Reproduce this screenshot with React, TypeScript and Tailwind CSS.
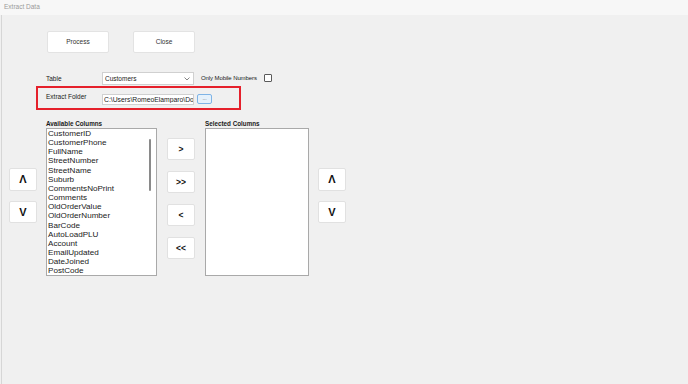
import React from 'react';

const available = [
  'CustomerID',
  'CustomerPhone',
  'FullName',
  'StreetNumber',
  'StreetName',
  'Suburb',
  'CommentsNoPrint',
  'Comments',
  'OldOrderValue',
  'OldOrderNumber',
  'BarCode',
  'AutoLoadPLU',
  'Account',
  'EmailUpdated',
  'DateJoined',
  'PostCode',
];

const ArrowButton: React.FC<{ label: string; className?: string }> = ({ label, className = '' }) => (
  <button
    className={`w-[28px] flex items-center justify-center bg-white border border-[#e1e1e1] rounded-[2px] text-[#111] font-bold leading-none ${className}`}
  >
    {label}
  </button>
);

const App: React.FC = () => {
  return (
    <div className="w-[688px] h-[384px] bg-[#f0f0f0] overflow-hidden font-['Liberation_Sans',Arial,sans-serif] text-[#1a1a1a]">
      {/* title bar */}
      <div className="h-[15px] bg-[#f7f7f7] pl-[4px] pt-[3px] text-[6.5px] leading-[8px] text-[#9a9a9a]">Extract Data</div>

      <div className="ml-[1px] h-[369px] border-l border-[#d6d6d6] flex flex-col">
        {/* action buttons */}
        <div className="mt-[16px] ml-[45px] flex gap-[24px]">
          <button className="w-[62px] h-[22px] bg-white border border-[#e3e3e3] rounded-[2px] text-[6.5px] text-[#333]">Process</button>
          <button className="w-[62px] h-[22px] bg-white border border-[#e3e3e3] rounded-[2px] text-[6.5px] text-[#333]">Close</button>
        </div>

        {/* table row */}
        <div className="mt-[19px] ml-[44px] flex items-center h-[13px]">
          <span className="w-[56px] text-[6.5px] mt-[1px]">Table</span>
          <div className="w-[92px] h-[13px] bg-white border border-[#d0d0d0] flex items-center justify-between pl-[2px] pr-[3px]">
            <span className="text-[6.5px]">Customers</span>
            <svg width="6" height="4" viewBox="0 0 6 4">
              <path d="M0.5 0.5 L3 3 L5.5 0.5" fill="none" stroke="#666" strokeWidth="0.8" />
            </svg>
          </div>
          <span className="ml-[7px] text-[6px] tracking-[-0.1px]">Only Mobile Numbers</span>
          <span className="ml-[7px] w-[8px] h-[8px] bg-white border border-[#5a5a5a] rounded-[1px] -mt-[1px]" />
        </div>

        {/* extract folder, highlighted */}
        <div className="mt-[1px] ml-[34px] w-[205px] h-[24px] border-2 border-[#e5202b] flex items-center pl-[8px]">
          <span className="w-[56px] text-[6.5px] -mt-[2px]">Extract Folder</span>
          <input
            readOnly
            value="C:\Users\RomeoElamparo\Downloads"
            className="w-[92px] h-[11px] bg-white border border-[#d0d0d0] pl-[1px] text-[6.8px] leading-none text-[#1a1a1a] mt-[2px] outline-none"
          />
          <button className="ml-[3px] w-[15px] h-[10px] bg-[#e5f1fb] border border-[#7fb4e6] rounded-[2px] text-[5px] leading-none text-[#555] mt-[1px]">...</button>
        </div>

        {/* columns area */}
        <div className="mt-[9px] ml-[7px] flex items-start">
          <div className="mt-[49px] flex flex-col gap-[10px]">
            <ArrowButton label="Λ" className="h-[23px] text-[11px]" />
            <ArrowButton label="V" className="h-[22px] text-[11px]" />
          </div>

          <div className="ml-[9px] flex flex-col">
            <span className="h-[9px] text-[6.3px] font-bold leading-[9px]">Available Columns</span>
            <div className="relative w-[111px] h-[148px] bg-white border border-[#a9a9a9] pl-[1px] overflow-hidden">
              {available.map((c) => (
                <div key={c} className="text-[8.1px] leading-[9.15px] whitespace-nowrap">
                  {c}
                </div>
              ))}
              <div className="absolute right-[5px] top-[10px] w-[2px] h-[52px] bg-[#8a8a8a] rounded-full" />
            </div>
          </div>

          <div className="ml-[10px] mt-[19px] flex flex-col gap-[11px]">
            <ArrowButton label=">" className="h-[22px] text-[8.5px]" />
            <ArrowButton label=">>" className="h-[22px] text-[8.5px]" />
            <ArrowButton label="<" className="h-[22px] text-[8.5px]" />
            <ArrowButton label="<<" className="h-[22px] text-[8.5px]" />
          </div>

          <div className="ml-[10px] flex flex-col">
            <span className="h-[9px] text-[6.3px] font-bold leading-[9px]">Selected Columns</span>
            <div className="w-[104px] h-[148px] bg-white border border-[#a9a9a9]" />
          </div>

          <div className="ml-[9px] mt-[49px] flex flex-col gap-[10px]">
            <ArrowButton label="Λ" className="h-[23px] text-[11px]" />
            <ArrowButton label="V" className="h-[22px] text-[11px]" />
          </div>
        </div>
      </div>
    </div>
  );
};

export default App;
